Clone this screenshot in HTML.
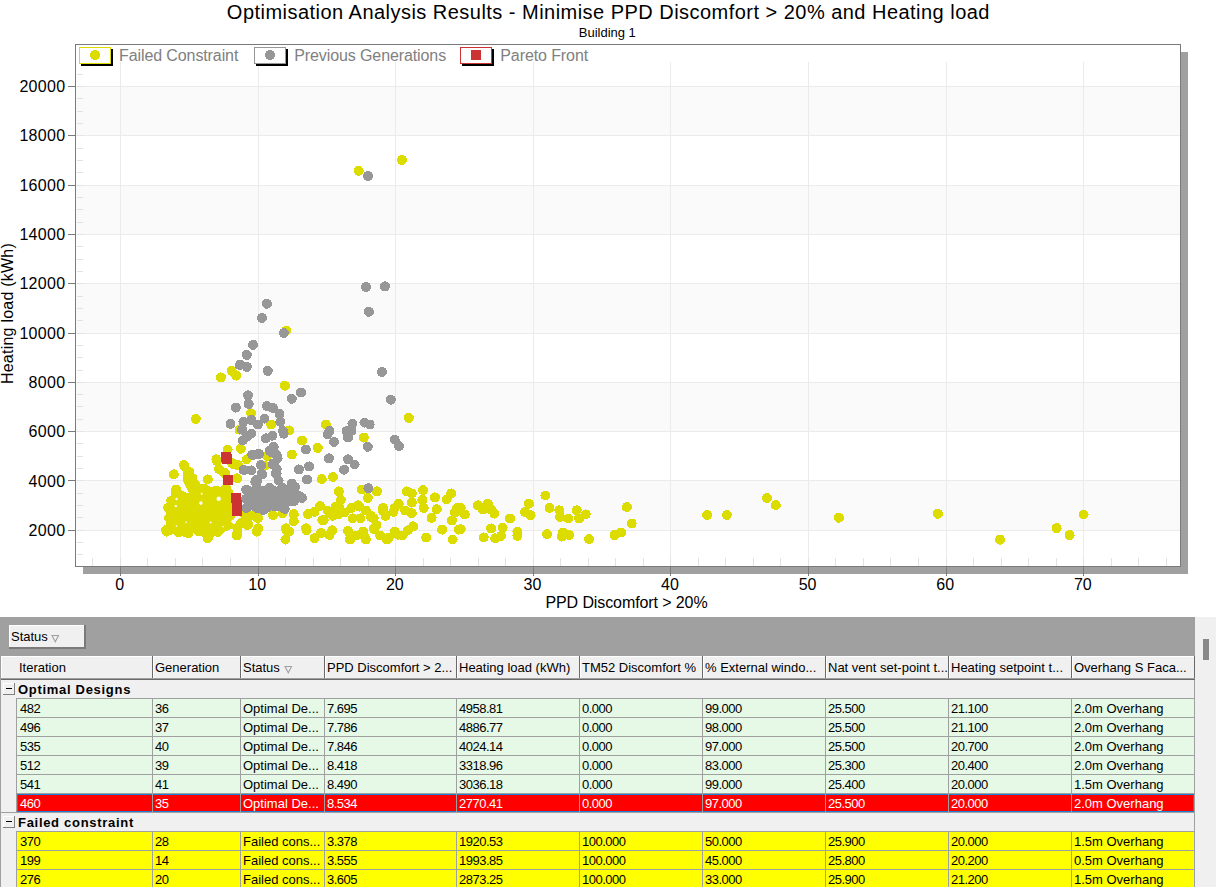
<!DOCTYPE html>
<html><head><meta charset="utf-8"><style>
html,body{margin:0;padding:0;background:#fff;width:1216px;height:887px;overflow:hidden;position:relative}
.tx{position:absolute;font-family:"Liberation Sans",sans-serif;font-size:13px;line-height:15px;white-space:nowrap;color:#000}
</style></head><body>
<svg width="1216" height="617" viewBox="0 0 1216 617" style="position:absolute;left:0;top:0">
<rect x="1181" y="52" width="7" height="522" fill="#a0a0a0"/>
<rect x="83" y="567" width="1105" height="7" fill="#a0a0a0"/>
<rect x="75.5" y="44.5" width="1105" height="522" fill="#fff" stroke="#7a7a7a" stroke-width="1"/>
<g shape-rendering="crispEdges">
<rect x="76" y="86" width="1104" height="49" fill="#fafafa"/>
<rect x="76" y="185" width="1104" height="49" fill="#fafafa"/>
<rect x="76" y="283" width="1104" height="50" fill="#fafafa"/>
<rect x="76" y="382" width="1104" height="49" fill="#fafafa"/>
<rect x="76" y="480" width="1104" height="50" fill="#fafafa"/>
<rect x="76" y="86" width="1104" height="1" fill="#ebebeb"/>
<rect x="76" y="135" width="1104" height="1" fill="#ebebeb"/>
<rect x="76" y="185" width="1104" height="1" fill="#ebebeb"/>
<rect x="76" y="234" width="1104" height="1" fill="#ebebeb"/>
<rect x="76" y="283" width="1104" height="1" fill="#ebebeb"/>
<rect x="76" y="333" width="1104" height="1" fill="#ebebeb"/>
<rect x="76" y="382" width="1104" height="1" fill="#ebebeb"/>
<rect x="76" y="431" width="1104" height="1" fill="#ebebeb"/>
<rect x="76" y="480" width="1104" height="1" fill="#ebebeb"/>
<rect x="76" y="530" width="1104" height="1" fill="#ebebeb"/>
<rect x="120" y="62" width="1" height="504" fill="#ebebeb"/>
<rect x="258" y="62" width="1" height="504" fill="#ebebeb"/>
<rect x="395" y="62" width="1" height="504" fill="#ebebeb"/>
<rect x="533" y="62" width="1" height="504" fill="#ebebeb"/>
<rect x="670" y="62" width="1" height="504" fill="#ebebeb"/>
<rect x="808" y="62" width="1" height="504" fill="#ebebeb"/>
<rect x="946" y="62" width="1" height="504" fill="#ebebeb"/>
<rect x="1083" y="62" width="1" height="504" fill="#ebebeb"/>
<rect x="77" y="554" width="6" height="1" fill="#e2e2e2"/>
<rect x="77" y="542" width="6" height="1" fill="#e2e2e2"/>
<rect x="77" y="530" width="6" height="1" fill="#e2e2e2"/>
<rect x="77" y="517" width="6" height="1" fill="#e2e2e2"/>
<rect x="77" y="505" width="6" height="1" fill="#e2e2e2"/>
<rect x="77" y="493" width="6" height="1" fill="#e2e2e2"/>
<rect x="77" y="480" width="6" height="1" fill="#e2e2e2"/>
<rect x="77" y="468" width="6" height="1" fill="#e2e2e2"/>
<rect x="77" y="456" width="6" height="1" fill="#e2e2e2"/>
<rect x="77" y="443" width="6" height="1" fill="#e2e2e2"/>
<rect x="77" y="431" width="6" height="1" fill="#e2e2e2"/>
<rect x="77" y="419" width="6" height="1" fill="#e2e2e2"/>
<rect x="77" y="406" width="6" height="1" fill="#e2e2e2"/>
<rect x="77" y="394" width="6" height="1" fill="#e2e2e2"/>
<rect x="77" y="382" width="6" height="1" fill="#e2e2e2"/>
<rect x="77" y="370" width="6" height="1" fill="#e2e2e2"/>
<rect x="77" y="357" width="6" height="1" fill="#e2e2e2"/>
<rect x="77" y="345" width="6" height="1" fill="#e2e2e2"/>
<rect x="77" y="333" width="6" height="1" fill="#e2e2e2"/>
<rect x="77" y="320" width="6" height="1" fill="#e2e2e2"/>
<rect x="77" y="308" width="6" height="1" fill="#e2e2e2"/>
<rect x="77" y="296" width="6" height="1" fill="#e2e2e2"/>
<rect x="77" y="283" width="6" height="1" fill="#e2e2e2"/>
<rect x="77" y="271" width="6" height="1" fill="#e2e2e2"/>
<rect x="77" y="259" width="6" height="1" fill="#e2e2e2"/>
<rect x="77" y="246" width="6" height="1" fill="#e2e2e2"/>
<rect x="77" y="234" width="6" height="1" fill="#e2e2e2"/>
<rect x="77" y="222" width="6" height="1" fill="#e2e2e2"/>
<rect x="77" y="209" width="6" height="1" fill="#e2e2e2"/>
<rect x="77" y="197" width="6" height="1" fill="#e2e2e2"/>
<rect x="77" y="185" width="6" height="1" fill="#e2e2e2"/>
<rect x="77" y="172" width="6" height="1" fill="#e2e2e2"/>
<rect x="77" y="160" width="6" height="1" fill="#e2e2e2"/>
<rect x="77" y="148" width="6" height="1" fill="#e2e2e2"/>
<rect x="77" y="135" width="6" height="1" fill="#e2e2e2"/>
<rect x="77" y="123" width="6" height="1" fill="#e2e2e2"/>
<rect x="77" y="111" width="6" height="1" fill="#e2e2e2"/>
<rect x="77" y="98" width="6" height="1" fill="#e2e2e2"/>
<rect x="77" y="86" width="6" height="1" fill="#e2e2e2"/>
<rect x="77" y="74" width="6" height="1" fill="#e2e2e2"/>
<rect x="92" y="558" width="1" height="8" fill="#e2e2e2"/>
<rect x="120" y="558" width="1" height="8" fill="#e2e2e2"/>
<rect x="147" y="558" width="1" height="8" fill="#e2e2e2"/>
<rect x="175" y="558" width="1" height="8" fill="#e2e2e2"/>
<rect x="202" y="558" width="1" height="8" fill="#e2e2e2"/>
<rect x="230" y="558" width="1" height="8" fill="#e2e2e2"/>
<rect x="258" y="558" width="1" height="8" fill="#e2e2e2"/>
<rect x="285" y="558" width="1" height="8" fill="#e2e2e2"/>
<rect x="313" y="558" width="1" height="8" fill="#e2e2e2"/>
<rect x="340" y="558" width="1" height="8" fill="#e2e2e2"/>
<rect x="368" y="558" width="1" height="8" fill="#e2e2e2"/>
<rect x="395" y="558" width="1" height="8" fill="#e2e2e2"/>
<rect x="423" y="558" width="1" height="8" fill="#e2e2e2"/>
<rect x="450" y="558" width="1" height="8" fill="#e2e2e2"/>
<rect x="478" y="558" width="1" height="8" fill="#e2e2e2"/>
<rect x="505" y="558" width="1" height="8" fill="#e2e2e2"/>
<rect x="533" y="558" width="1" height="8" fill="#e2e2e2"/>
<rect x="560" y="558" width="1" height="8" fill="#e2e2e2"/>
<rect x="588" y="558" width="1" height="8" fill="#e2e2e2"/>
<rect x="615" y="558" width="1" height="8" fill="#e2e2e2"/>
<rect x="643" y="558" width="1" height="8" fill="#e2e2e2"/>
<rect x="670" y="558" width="1" height="8" fill="#e2e2e2"/>
<rect x="698" y="558" width="1" height="8" fill="#e2e2e2"/>
<rect x="725" y="558" width="1" height="8" fill="#e2e2e2"/>
<rect x="753" y="558" width="1" height="8" fill="#e2e2e2"/>
<rect x="780" y="558" width="1" height="8" fill="#e2e2e2"/>
<rect x="808" y="558" width="1" height="8" fill="#e2e2e2"/>
<rect x="835" y="558" width="1" height="8" fill="#e2e2e2"/>
<rect x="863" y="558" width="1" height="8" fill="#e2e2e2"/>
<rect x="890" y="558" width="1" height="8" fill="#e2e2e2"/>
<rect x="918" y="558" width="1" height="8" fill="#e2e2e2"/>
<rect x="946" y="558" width="1" height="8" fill="#e2e2e2"/>
<rect x="973" y="558" width="1" height="8" fill="#e2e2e2"/>
<rect x="1001" y="558" width="1" height="8" fill="#e2e2e2"/>
<rect x="1028" y="558" width="1" height="8" fill="#e2e2e2"/>
<rect x="1056" y="558" width="1" height="8" fill="#e2e2e2"/>
<rect x="1083" y="558" width="1" height="8" fill="#e2e2e2"/>
<rect x="1111" y="558" width="1" height="8" fill="#e2e2e2"/>
<rect x="1138" y="558" width="1" height="8" fill="#e2e2e2"/>
<rect x="1166" y="558" width="1" height="8" fill="#e2e2e2"/>
<rect x="68" y="86" width="7" height="1" fill="#7a7a7a"/>
<rect x="68" y="135" width="7" height="1" fill="#7a7a7a"/>
<rect x="68" y="185" width="7" height="1" fill="#7a7a7a"/>
<rect x="68" y="234" width="7" height="1" fill="#7a7a7a"/>
<rect x="68" y="283" width="7" height="1" fill="#7a7a7a"/>
<rect x="68" y="333" width="7" height="1" fill="#7a7a7a"/>
<rect x="68" y="382" width="7" height="1" fill="#7a7a7a"/>
<rect x="68" y="431" width="7" height="1" fill="#7a7a7a"/>
<rect x="68" y="480" width="7" height="1" fill="#7a7a7a"/>
<rect x="68" y="530" width="7" height="1" fill="#7a7a7a"/>
<rect x="120" y="567" width="1" height="9" fill="#7a7a7a"/>
<rect x="258" y="567" width="1" height="9" fill="#7a7a7a"/>
<rect x="395" y="567" width="1" height="9" fill="#7a7a7a"/>
<rect x="533" y="567" width="1" height="9" fill="#7a7a7a"/>
<rect x="670" y="567" width="1" height="9" fill="#7a7a7a"/>
<rect x="808" y="567" width="1" height="9" fill="#7a7a7a"/>
<rect x="946" y="567" width="1" height="9" fill="#7a7a7a"/>
<rect x="1083" y="567" width="1" height="9" fill="#7a7a7a"/>
</g>
<g font-family="Liberation Sans" font-size="16" fill="#000">
<text x="65.4" y="92.1" text-anchor="end" letter-spacing="0.3">20000</text>
<text x="65.4" y="141.4" text-anchor="end" letter-spacing="0.3">18000</text>
<text x="65.4" y="190.7" text-anchor="end" letter-spacing="0.3">16000</text>
<text x="65.4" y="240.1" text-anchor="end" letter-spacing="0.3">14000</text>
<text x="65.4" y="289.4" text-anchor="end" letter-spacing="0.3">12000</text>
<text x="65.4" y="338.7" text-anchor="end" letter-spacing="0.3">10000</text>
<text x="65.4" y="388.0" text-anchor="end" letter-spacing="0.3">8000</text>
<text x="65.4" y="437.4" text-anchor="end" letter-spacing="0.3">6000</text>
<text x="65.4" y="486.7" text-anchor="end" letter-spacing="0.3">4000</text>
<text x="65.4" y="536.0" text-anchor="end" letter-spacing="0.3">2000</text>
<text x="119.6" y="589.6" text-anchor="middle">0</text>
<text x="257.2" y="589.6" text-anchor="middle">10</text>
<text x="394.8" y="589.6" text-anchor="middle">20</text>
<text x="532.4" y="589.6" text-anchor="middle">30</text>
<text x="670.0" y="589.6" text-anchor="middle">40</text>
<text x="807.6" y="589.6" text-anchor="middle">50</text>
<text x="945.2" y="589.6" text-anchor="middle">60</text>
<text x="1082.8" y="589.6" text-anchor="middle">70</text>
<text x="626.5" y="607.8" text-anchor="middle" letter-spacing="-0.1">PPD Discomfort &gt; 20%</text>
<text transform="translate(13,313.5) rotate(-90)" text-anchor="middle" letter-spacing="0.23">Heating load (kWh)</text>
</g>
<text x="608.4" y="18.9" text-anchor="middle" font-family="Liberation Sans" font-size="20" letter-spacing="0.47">Optimisation Analysis Results - Minimise PPD Discomfort &gt; 20% and Heating load</text>
<text x="607.3" y="37.2" text-anchor="middle" font-family="Liberation Sans" font-size="13">Building 1</text>
<g fill="#dcdc00" shape-rendering="crispEdges">
<circle cx="358.7" cy="170.8" r="5"/>
<circle cx="401.9" cy="159.9" r="5"/>
<circle cx="286.3" cy="330.6" r="5"/>
<circle cx="231.7" cy="370.9" r="5"/>
<circle cx="236.3" cy="375.6" r="5"/>
<circle cx="220.9" cy="377.4" r="5"/>
<circle cx="284.9" cy="385.7" r="5"/>
<circle cx="195.8" cy="419.0" r="5"/>
<circle cx="251.0" cy="413.3" r="5"/>
<circle cx="239.5" cy="429.7" r="5"/>
<circle cx="271.3" cy="424.5" r="5"/>
<circle cx="289.2" cy="430.4" r="5"/>
<circle cx="302.0" cy="440.5" r="5"/>
<circle cx="227.6" cy="449.5" r="5"/>
<circle cx="240.8" cy="448.8" r="5"/>
<circle cx="291.8" cy="454.5" r="5"/>
<circle cx="267.1" cy="456.0" r="5"/>
<circle cx="216.4" cy="459.3" r="5"/>
<circle cx="246.7" cy="459.3" r="5"/>
<circle cx="408.8" cy="417.9" r="5"/>
<circle cx="325.9" cy="424.5" r="5"/>
<circle cx="363.8" cy="437.6" r="5"/>
<circle cx="317.8" cy="447.9" r="5"/>
<circle cx="183.9" cy="465.1" r="5"/>
<circle cx="173.8" cy="474.3" r="5"/>
<circle cx="207.8" cy="479.4" r="5"/>
<circle cx="216.9" cy="461.1" r="5"/>
<circle cx="218.9" cy="469.2" r="5"/>
<circle cx="225.0" cy="473.3" r="5"/>
<circle cx="238.2" cy="465.1" r="5"/>
<circle cx="232.1" cy="463.1" r="5"/>
<circle cx="237.2" cy="478.3" r="5"/>
<circle cx="189.5" cy="472.2" r="5"/>
<circle cx="192.5" cy="478.3" r="5"/>
<circle cx="176.3" cy="489.5" r="5"/>
<circle cx="195.6" cy="485.4" r="5"/>
<circle cx="203.7" cy="488.5" r="5"/>
<circle cx="215.9" cy="490.5" r="5"/>
<circle cx="226.0" cy="488.5" r="5"/>
<circle cx="171.2" cy="500.7" r="5"/>
<circle cx="168.2" cy="507.8" r="5"/>
<circle cx="169.2" cy="517.9" r="5"/>
<circle cx="166.2" cy="530.1" r="5"/>
<circle cx="178.3" cy="532.1" r="5"/>
<circle cx="188.5" cy="533.1" r="5"/>
<circle cx="198.6" cy="531.1" r="5"/>
<circle cx="207.8" cy="538.2" r="5"/>
<circle cx="218.9" cy="530.1" r="5"/>
<circle cx="226.0" cy="526.0" r="5"/>
<circle cx="237.2" cy="534.1" r="5"/>
<circle cx="230.1" cy="515.9" r="5"/>
<circle cx="228.0" cy="500.7" r="5"/>
<circle cx="234.2" cy="464.5" r="5"/>
<circle cx="264.5" cy="465.8" r="5"/>
<circle cx="223.7" cy="472.4" r="5"/>
<circle cx="238.0" cy="465.4" r="5"/>
<circle cx="321.8" cy="479.1" r="5"/>
<circle cx="273.0" cy="515.1" r="5"/>
<circle cx="282.7" cy="513.1" r="5"/>
<circle cx="293.8" cy="514.1" r="5"/>
<circle cx="293.8" cy="521.2" r="5"/>
<circle cx="308.0" cy="514.1" r="5"/>
<circle cx="320.2" cy="506.0" r="5"/>
<circle cx="322.3" cy="520.2" r="5"/>
<circle cx="255.3" cy="516.1" r="5"/>
<circle cx="245.1" cy="515.1" r="5"/>
<circle cx="241.1" cy="523.2" r="5"/>
<circle cx="248.2" cy="524.2" r="5"/>
<circle cx="258.3" cy="528.3" r="5"/>
<circle cx="285.7" cy="528.3" r="5"/>
<circle cx="306.0" cy="528.3" r="5"/>
<circle cx="256.6" cy="531.6" r="5"/>
<circle cx="306.6" cy="530.3" r="5"/>
<circle cx="286.8" cy="530.3" r="5"/>
<circle cx="285.5" cy="539.5" r="5"/>
<circle cx="289.5" cy="531.6" r="5"/>
<circle cx="236.8" cy="535.5" r="5"/>
<circle cx="247.4" cy="525.0" r="5"/>
<circle cx="332.9" cy="477.0" r="5"/>
<circle cx="338.8" cy="491.4" r="5"/>
<circle cx="340.8" cy="500.0" r="5"/>
<circle cx="361.8" cy="489.5" r="5"/>
<circle cx="377.0" cy="491.4" r="5"/>
<circle cx="367.8" cy="498.0" r="5"/>
<circle cx="406.6" cy="491.4" r="5"/>
<circle cx="411.8" cy="493.4" r="5"/>
<circle cx="423.0" cy="490.1" r="5"/>
<circle cx="422.4" cy="500.0" r="5"/>
<circle cx="423.7" cy="507.9" r="5"/>
<circle cx="434.9" cy="497.4" r="5"/>
<circle cx="451.3" cy="493.4" r="5"/>
<circle cx="446.7" cy="499.3" r="5"/>
<circle cx="436.8" cy="509.2" r="5"/>
<circle cx="431.6" cy="517.8" r="5"/>
<circle cx="457.2" cy="507.9" r="5"/>
<circle cx="452.0" cy="520.4" r="5"/>
<circle cx="314.5" cy="511.8" r="5"/>
<circle cx="327.6" cy="510.5" r="5"/>
<circle cx="335.5" cy="506.6" r="5"/>
<circle cx="332.9" cy="515.8" r="5"/>
<circle cx="351.3" cy="507.9" r="5"/>
<circle cx="357.9" cy="505.3" r="5"/>
<circle cx="352.6" cy="518.4" r="5"/>
<circle cx="365.8" cy="510.5" r="5"/>
<circle cx="373.7" cy="518.4" r="5"/>
<circle cx="382.9" cy="507.9" r="5"/>
<circle cx="385.5" cy="515.8" r="5"/>
<circle cx="393.4" cy="511.8" r="5"/>
<circle cx="398.7" cy="503.9" r="5"/>
<circle cx="405.3" cy="510.5" r="5"/>
<circle cx="411.8" cy="513.2" r="5"/>
<circle cx="411.8" cy="502.6" r="5"/>
<circle cx="314.5" cy="538.2" r="5"/>
<circle cx="321.1" cy="532.9" r="5"/>
<circle cx="332.2" cy="530.3" r="5"/>
<circle cx="329.6" cy="534.9" r="5"/>
<circle cx="348.0" cy="530.9" r="5"/>
<circle cx="350.0" cy="539.5" r="5"/>
<circle cx="363.2" cy="531.6" r="5"/>
<circle cx="365.8" cy="539.5" r="5"/>
<circle cx="373.7" cy="528.9" r="5"/>
<circle cx="376.3" cy="525.0" r="5"/>
<circle cx="380.3" cy="535.5" r="5"/>
<circle cx="386.8" cy="539.5" r="5"/>
<circle cx="394.7" cy="531.6" r="5"/>
<circle cx="402.6" cy="535.5" r="5"/>
<circle cx="413.2" cy="526.3" r="5"/>
<circle cx="407.9" cy="530.3" r="5"/>
<circle cx="426.3" cy="537.5" r="5"/>
<circle cx="442.1" cy="529.6" r="5"/>
<circle cx="452.6" cy="539.5" r="5"/>
<circle cx="458.6" cy="529.6" r="5"/>
<circle cx="371.0" cy="515.8" r="5"/>
<circle cx="360.5" cy="518.4" r="5"/>
<circle cx="356.6" cy="535.5" r="5"/>
<circle cx="339.5" cy="507.9" r="5"/>
<circle cx="460.7" cy="507.8" r="5"/>
<circle cx="454.9" cy="512.8" r="5"/>
<circle cx="464.8" cy="514.4" r="5"/>
<circle cx="460.7" cy="529.2" r="5"/>
<circle cx="478.0" cy="505.4" r="5"/>
<circle cx="487.8" cy="503.7" r="5"/>
<circle cx="482.9" cy="509.5" r="5"/>
<circle cx="491.1" cy="509.5" r="5"/>
<circle cx="494.4" cy="513.6" r="5"/>
<circle cx="510.0" cy="518.5" r="5"/>
<circle cx="528.9" cy="503.7" r="5"/>
<circle cx="524.8" cy="512.0" r="5"/>
<circle cx="530.6" cy="515.2" r="5"/>
<circle cx="491.1" cy="528.4" r="5"/>
<circle cx="502.6" cy="527.6" r="5"/>
<circle cx="501.0" cy="535.8" r="5"/>
<circle cx="495.2" cy="538.3" r="5"/>
<circle cx="483.7" cy="537.4" r="5"/>
<circle cx="517.4" cy="531.7" r="5"/>
<circle cx="517.4" cy="535.8" r="5"/>
<circle cx="545.4" cy="495.5" r="5"/>
<circle cx="549.5" cy="507.8" r="5"/>
<circle cx="559.4" cy="510.3" r="5"/>
<circle cx="560.2" cy="516.9" r="5"/>
<circle cx="568.4" cy="518.5" r="5"/>
<circle cx="576.6" cy="510.3" r="5"/>
<circle cx="579.1" cy="518.5" r="5"/>
<circle cx="585.7" cy="514.4" r="5"/>
<circle cx="547.0" cy="534.1" r="5"/>
<circle cx="562.7" cy="532.5" r="5"/>
<circle cx="561.8" cy="536.6" r="5"/>
<circle cx="569.2" cy="535.0" r="5"/>
<circle cx="589.0" cy="539.1" r="5"/>
<circle cx="626.8" cy="507.0" r="5"/>
<circle cx="631.7" cy="523.5" r="5"/>
<circle cx="621.1" cy="532.5" r="5"/>
<circle cx="614.5" cy="535.0" r="5"/>
<circle cx="707.1" cy="515.0" r="5"/>
<circle cx="726.8" cy="515.0" r="5"/>
<circle cx="766.9" cy="498.0" r="5"/>
<circle cx="775.8" cy="505.1" r="5"/>
<circle cx="838.9" cy="517.8" r="5"/>
<circle cx="937.9" cy="513.8" r="5"/>
<circle cx="1000.0" cy="539.7" r="5"/>
<circle cx="1056.6" cy="528.1" r="5"/>
<circle cx="1069.6" cy="535.1" r="5"/>
<circle cx="1083.6" cy="514.5" r="5"/>
<circle cx="344.4" cy="512.5" r="5"/>
<circle cx="371.0" cy="517.0" r="5"/>
<circle cx="382.9" cy="511.0" r="5"/>
<circle cx="394.7" cy="508.0" r="5"/>
<circle cx="363.6" cy="534.7" r="5"/>
<circle cx="374.0" cy="528.8" r="5"/>
<circle cx="388.8" cy="537.7" r="5"/>
<circle cx="397.7" cy="534.7" r="5"/>
<circle cx="350.3" cy="534.7" r="5"/>
<circle cx="338.5" cy="514.0" r="5"/>
<circle cx="359.2" cy="506.6" r="5"/>
<circle cx="329.6" cy="512.5" r="5"/>
<circle cx="323.7" cy="520.0" r="5"/>
<circle cx="252.0" cy="515.5" r="5"/>
<circle cx="258.0" cy="518.0" r="5"/>
<path d="M179.2,465.6 L181.4,461.7 186.5,461.7 188.7,465.6 191.6,470.1 196.6,476.9 198.9,483.7 205.1,485.9 210,486.5 215.9,488 224,486.5 230,488 233,491 236,500 236,516 231,516 229,519.4 234.2,524.6 238,520.2 242,516 242,529 242.4,535 238,539.4 233.5,535.7 232.8,529 229,529 224.6,532 219.4,536.8 214.3,536.4 208.3,542.7 203.9,538.7 199.5,534.2 194.3,532.8 188.3,537.9 180.2,535.7 175.8,532.8 166.1,536.8 161.7,533.5 161.7,529.8 165.4,526.1 166.9,519.4 166.1,514.2 165.4,507.6 167.3,500.6 171.3,497.2 171.3,491.6 171.8,488.2 175.2,486.2 178.6,487.6 181.4,490.4 189.3,493.8 185.4,485.9 182.5,480.3 183.1,471.8 179.7,468.5 Z"/>
</g>
<g fill="#fafafa">
<circle cx="218.7" cy="498.7" r="2.2"/>
<circle cx="200.9" cy="503.1" r="1.8"/>
<circle cx="175.8" cy="506.1" r="1.2"/>
<circle cx="176.6" cy="499" r="1.2"/>
<circle cx="201.7" cy="493.8" r="1"/>
<circle cx="186.1" cy="522.4" r="0.8"/>
<circle cx="176.5" cy="526.1" r="0.8"/>
<circle cx="210.6" cy="522.4" r="1"/>
<circle cx="223.1" cy="526.8" r="0.8"/>
<circle cx="233.5" cy="521.5" r="2"/>
</g>
<g fill="#979797" shape-rendering="crispEdges">
<circle cx="368.0" cy="176.0" r="5"/>
<circle cx="366.0" cy="287.0" r="5"/>
<circle cx="385.0" cy="286.4" r="5"/>
<circle cx="266.9" cy="303.8" r="5"/>
<circle cx="261.9" cy="317.9" r="5"/>
<circle cx="283.8" cy="333.0" r="5"/>
<circle cx="253.0" cy="344.8" r="5"/>
<circle cx="246.8" cy="354.9" r="5"/>
<circle cx="239.8" cy="365.1" r="5"/>
<circle cx="246.8" cy="367.0" r="5"/>
<circle cx="267.8" cy="370.9" r="5"/>
<circle cx="368.9" cy="311.8" r="5"/>
<circle cx="381.9" cy="371.9" r="5"/>
<circle cx="240.1" cy="364.6" r="5"/>
<circle cx="246.7" cy="366.6" r="5"/>
<circle cx="301.0" cy="392.6" r="5"/>
<circle cx="291.8" cy="398.8" r="5"/>
<circle cx="248.0" cy="395.3" r="5"/>
<circle cx="248.7" cy="404.0" r="5"/>
<circle cx="235.8" cy="407.6" r="5"/>
<circle cx="266.8" cy="406.0" r="5"/>
<circle cx="273.0" cy="408.0" r="5"/>
<circle cx="279.6" cy="414.0" r="5"/>
<circle cx="280.3" cy="421.8" r="5"/>
<circle cx="282.9" cy="431.0" r="5"/>
<circle cx="283.6" cy="433.7" r="5"/>
<circle cx="230.5" cy="423.8" r="5"/>
<circle cx="243.4" cy="421.8" r="5"/>
<circle cx="251.3" cy="419.9" r="5"/>
<circle cx="257.9" cy="424.5" r="5"/>
<circle cx="264.5" cy="418.6" r="5"/>
<circle cx="242.1" cy="429.7" r="5"/>
<circle cx="251.3" cy="433.7" r="5"/>
<circle cx="247.4" cy="436.3" r="5"/>
<circle cx="242.8" cy="440.3" r="5"/>
<circle cx="265.8" cy="438.3" r="5"/>
<circle cx="272.4" cy="435.7" r="5"/>
<circle cx="273.7" cy="446.8" r="5"/>
<circle cx="269.7" cy="450.8" r="5"/>
<circle cx="276.3" cy="454.7" r="5"/>
<circle cx="254.0" cy="454.7" r="5"/>
<circle cx="259.2" cy="454.1" r="5"/>
<circle cx="305.9" cy="449.5" r="5"/>
<circle cx="390.8" cy="399.7" r="5"/>
<circle cx="352.4" cy="423.8" r="5"/>
<circle cx="364.5" cy="422.5" r="5"/>
<circle cx="369.7" cy="424.5" r="5"/>
<circle cx="346.7" cy="431.0" r="5"/>
<circle cx="351.3" cy="431.0" r="5"/>
<circle cx="348.0" cy="437.6" r="5"/>
<circle cx="329.6" cy="431.0" r="5"/>
<circle cx="327.6" cy="434.3" r="5"/>
<circle cx="334.0" cy="441.8" r="5"/>
<circle cx="367.8" cy="446.8" r="5"/>
<circle cx="394.7" cy="439.6" r="5"/>
<circle cx="398.9" cy="446.2" r="5"/>
<circle cx="329.0" cy="458.4" r="5"/>
<circle cx="348.0" cy="459.3" r="5"/>
<circle cx="277.6" cy="458.3" r="5"/>
<circle cx="273.6" cy="463.3" r="5"/>
<circle cx="261.4" cy="465.4" r="5"/>
<circle cx="244.1" cy="469.9" r="5"/>
<circle cx="251.2" cy="470.4" r="5"/>
<circle cx="298.9" cy="469.4" r="5"/>
<circle cx="309.1" cy="466.4" r="5"/>
<circle cx="307.0" cy="479.6" r="5"/>
<circle cx="262.4" cy="474.5" r="5"/>
<circle cx="276.6" cy="473.5" r="5"/>
<circle cx="255.3" cy="481.6" r="5"/>
<circle cx="257.0" cy="481.0" r="5"/>
<circle cx="278.6" cy="480.6" r="5"/>
<circle cx="291.8" cy="483.6" r="5"/>
<circle cx="294.9" cy="486.7" r="5"/>
<circle cx="246.2" cy="489.7" r="5"/>
<circle cx="257.3" cy="488.7" r="5"/>
<circle cx="269.5" cy="487.7" r="5"/>
<circle cx="282.7" cy="487.7" r="5"/>
<circle cx="287.8" cy="491.7" r="5"/>
<circle cx="302.0" cy="497.8" r="5"/>
<circle cx="295.9" cy="495.8" r="5"/>
<circle cx="246.2" cy="498.8" r="5"/>
<circle cx="257.3" cy="498.8" r="5"/>
<circle cx="268.5" cy="496.8" r="5"/>
<circle cx="279.6" cy="496.8" r="5"/>
<circle cx="289.8" cy="500.9" r="5"/>
<circle cx="246.2" cy="508.0" r="5"/>
<circle cx="257.3" cy="508.0" r="5"/>
<circle cx="267.5" cy="507.0" r="5"/>
<circle cx="278.6" cy="506.0" r="5"/>
<circle cx="284.7" cy="509.0" r="5"/>
<circle cx="263.4" cy="510.0" r="5"/>
<circle cx="354.6" cy="464.5" r="5"/>
<circle cx="344.1" cy="469.7" r="5"/>
<circle cx="368.4" cy="488.2" r="5"/>
<circle cx="252.2" cy="454.7" r="5"/>
<circle cx="258.5" cy="453.9" r="5"/>
<circle cx="243.5" cy="469.7" r="5"/>
<circle cx="251.4" cy="470.5" r="5"/>
<circle cx="260.9" cy="465.0" r="5"/>
<circle cx="261.7" cy="473.7" r="5"/>
<circle cx="256.2" cy="480.0" r="5"/>
<circle cx="271.9" cy="452.4" r="5"/>
<circle cx="277.5" cy="457.1" r="5"/>
<circle cx="272.7" cy="464.2" r="5"/>
<circle cx="276.7" cy="468.9" r="5"/>
<circle cx="275.9" cy="473.7" r="5"/>
<circle cx="249.0" cy="491.0" r="5"/>
<circle cx="254.0" cy="491.0" r="5"/>
<circle cx="259.0" cy="491.0" r="5"/>
<circle cx="264.0" cy="491.0" r="5"/>
<circle cx="269.0" cy="491.0" r="5"/>
<circle cx="274.0" cy="491.0" r="5"/>
<circle cx="279.0" cy="491.0" r="5"/>
<circle cx="284.0" cy="491.0" r="5"/>
<circle cx="289.0" cy="491.0" r="5"/>
<circle cx="294.0" cy="491.0" r="5"/>
<circle cx="249.0" cy="496.0" r="5"/>
<circle cx="254.0" cy="496.0" r="5"/>
<circle cx="259.0" cy="496.0" r="5"/>
<circle cx="264.0" cy="496.0" r="5"/>
<circle cx="269.0" cy="496.0" r="5"/>
<circle cx="274.0" cy="496.0" r="5"/>
<circle cx="279.0" cy="496.0" r="5"/>
<circle cx="284.0" cy="496.0" r="5"/>
<circle cx="289.0" cy="496.0" r="5"/>
<circle cx="294.0" cy="496.0" r="5"/>
<circle cx="299.0" cy="496.0" r="5"/>
<circle cx="249.0" cy="501.0" r="5"/>
<circle cx="254.0" cy="501.0" r="5"/>
<circle cx="259.0" cy="501.0" r="5"/>
<circle cx="264.0" cy="501.0" r="5"/>
<circle cx="269.0" cy="501.0" r="5"/>
<circle cx="274.0" cy="501.0" r="5"/>
<circle cx="279.0" cy="501.0" r="5"/>
<circle cx="284.0" cy="501.0" r="5"/>
<circle cx="289.0" cy="501.0" r="5"/>
<circle cx="294.0" cy="501.0" r="5"/>
<circle cx="249.0" cy="506.0" r="5"/>
<circle cx="254.0" cy="506.0" r="5"/>
<circle cx="259.0" cy="506.0" r="5"/>
<circle cx="264.0" cy="506.0" r="5"/>
<circle cx="269.0" cy="506.0" r="5"/>
<circle cx="274.0" cy="506.0" r="5"/>
<circle cx="279.0" cy="506.0" r="5"/>
<circle cx="284.0" cy="506.0" r="5"/>
</g>
<g fill="#cc3333" shape-rendering="crispEdges">
<rect x="221" y="452" width="10" height="10"/>
<rect x="222" y="454" width="10" height="10"/>
<rect x="223" y="475" width="10" height="10"/>
<rect x="231" y="493" width="10" height="10"/>
<rect x="232" y="500" width="10" height="10"/>
<rect x="232" y="506" width="10" height="10"/>
</g>
<rect x="81" y="49" width="32" height="17" fill="#000" shape-rendering="crispEdges"/><rect x="79.5" y="47.5" width="31" height="16" fill="#fff" stroke="#dcdc00" stroke-width="1" shape-rendering="crispEdges"/><circle cx="95" cy="55" r="5" fill="#dcdc00" shape-rendering="crispEdges"/>
<rect x="256" y="49" width="32" height="17" fill="#000" shape-rendering="crispEdges"/><rect x="254.5" y="47.5" width="31" height="16" fill="#fff" stroke="#979797" stroke-width="1" shape-rendering="crispEdges"/><circle cx="270" cy="55" r="5" fill="#979797" shape-rendering="crispEdges"/>
<rect x="462" y="49" width="32" height="17" fill="#000" shape-rendering="crispEdges"/><rect x="460.5" y="47.5" width="31" height="16" fill="#fff" stroke="#cc3333" stroke-width="1" shape-rendering="crispEdges"/><rect x="471" y="50" width="10" height="10" fill="#cc3333"/>
<g font-family="Liberation Sans" font-size="16" fill="#808080" letter-spacing="-0.1">
<text x="119" y="60.7">Failed Constraint</text>
<text x="294.2" y="60.7">Previous Generations</text>
<text x="500.3" y="60.7">Pareto Front</text>
</g>
</svg>
<div style="position:absolute;left:0px;top:617px;width:1195px;height:270px;background:#f0f0f0;"></div>
<div style="position:absolute;left:0px;top:617px;width:1195px;height:39px;background:#a0a0a0;"></div>
<div style="position:absolute;left:9px;top:625px;width:77px;height:24px;background:#7a7a7a;"></div>
<div style="position:absolute;left:9px;top:625px;width:75px;height:22px;background:#fff;"></div>
<div style="position:absolute;left:10px;top:626px;width:74px;height:21px;background:#f0f0f0;"></div>
<div class="tx" style="left:11px;top:629px;">Status</div>
<svg style="position:absolute;left:51px;top:635px" width="9" height="8"><polygon points="1,0.5 7.5,0.5 4.3,6.8" fill="none" stroke="#a0a0a0" stroke-width="1.1"/></svg>
<div style="position:absolute;left:0px;top:656px;width:1195px;height:24px;background:#f0f0f0;"></div>
<div style="position:absolute;left:1px;top:656px;width:1193px;height:1px;background:#fff;"></div>
<div style="position:absolute;left:152px;top:656px;width:1px;height:24px;background:#696969;"></div>
<div style="position:absolute;left:1px;top:657px;width:1px;height:21px;background:#fff;"></div>
<div class="tx" style="left:19px;top:660px;">Iteration</div>
<div style="position:absolute;left:240px;top:656px;width:1px;height:24px;background:#696969;"></div>
<div style="position:absolute;left:153px;top:657px;width:1px;height:21px;background:#fff;"></div>
<div class="tx" style="left:155px;top:660px;">Generation</div>
<div style="position:absolute;left:324px;top:656px;width:1px;height:24px;background:#696969;"></div>
<div style="position:absolute;left:241px;top:657px;width:1px;height:21px;background:#fff;"></div>
<svg style="position:absolute;left:284px;top:666px" width="9" height="8"><polygon points="1,0.5 7.5,0.5 4.3,6.8" fill="none" stroke="#a0a0a0" stroke-width="1.1"/></svg>
<div class="tx" style="left:243px;top:660px;">Status</div>
<div style="position:absolute;left:456px;top:656px;width:1px;height:24px;background:#696969;"></div>
<div style="position:absolute;left:325px;top:657px;width:1px;height:21px;background:#fff;"></div>
<div class="tx" style="left:327px;top:660px;">PPD Discomfort &gt; 2...</div>
<div style="position:absolute;left:579px;top:656px;width:1px;height:24px;background:#696969;"></div>
<div style="position:absolute;left:457px;top:657px;width:1px;height:21px;background:#fff;"></div>
<div class="tx" style="left:459px;top:660px;">Heating load (kWh)</div>
<div style="position:absolute;left:702px;top:656px;width:1px;height:24px;background:#696969;"></div>
<div style="position:absolute;left:580px;top:657px;width:1px;height:21px;background:#fff;"></div>
<div class="tx" style="left:582px;top:660px;">TM52 Discomfort %</div>
<div style="position:absolute;left:825px;top:656px;width:1px;height:24px;background:#696969;"></div>
<div style="position:absolute;left:703px;top:657px;width:1px;height:21px;background:#fff;"></div>
<div class="tx" style="left:705px;top:660px;">% External windo...</div>
<div style="position:absolute;left:948px;top:656px;width:1px;height:24px;background:#696969;"></div>
<div style="position:absolute;left:826px;top:657px;width:1px;height:21px;background:#fff;"></div>
<div class="tx" style="left:828px;top:660px;">Nat vent set-point t...</div>
<div style="position:absolute;left:1071px;top:656px;width:1px;height:24px;background:#696969;"></div>
<div style="position:absolute;left:949px;top:657px;width:1px;height:21px;background:#fff;"></div>
<div class="tx" style="left:951px;top:660px;">Heating setpoint t...</div>
<div style="position:absolute;left:1194px;top:656px;width:1px;height:24px;background:#696969;"></div>
<div style="position:absolute;left:1072px;top:657px;width:1px;height:21px;background:#fff;"></div>
<div class="tx" style="left:1074px;top:660px;">Overhang S Faca...</div>
<div style="position:absolute;left:1px;top:678px;width:1194px;height:1px;background:#a0a0a0;"></div>
<div style="position:absolute;left:1px;top:679px;width:1194px;height:1px;background:#696969;"></div>
<div style="position:absolute;left:0px;top:617px;width:1px;height:270px;background:#a0a0a0;"></div>
<div style="position:absolute;left:3px;top:683px;width:12px;height:12px;background:#808080;"></div>
<div style="position:absolute;left:3px;top:683px;width:11px;height:11px;background:#fff;"></div>
<div style="position:absolute;left:4px;top:684px;width:10px;height:10px;background:#f0f0f0;"></div>
<div style="position:absolute;left:6px;top:688px;width:6px;height:1px;background:#000;"></div>
<div class="tx" style="left:18px;top:682px;font-weight:bold;letter-spacing:0.7px">Optimal Designs</div>
<div style="position:absolute;left:16px;top:698px;width:1179px;height:20px;background:#a0a0a0;"></div>
<div style="position:absolute;left:17px;top:699px;width:1177px;height:18px;background:#e6f9e6;"></div>
<div class="tx" style="left:20px;top:701px;color:#000;letter-spacing:-0.5px;">482</div>
<div style="position:absolute;left:152px;top:698px;width:1px;height:20px;background:#a0a0a0;"></div>
<div class="tx" style="left:155px;top:701px;color:#000;letter-spacing:-0.5px;">36</div>
<div style="position:absolute;left:240px;top:698px;width:1px;height:20px;background:#a0a0a0;"></div>
<div class="tx" style="left:243px;top:701px;color:#000;">Optimal De...</div>
<div style="position:absolute;left:324px;top:698px;width:1px;height:20px;background:#a0a0a0;"></div>
<div class="tx" style="left:327px;top:701px;color:#000;letter-spacing:-0.5px;">7.695</div>
<div style="position:absolute;left:456px;top:698px;width:1px;height:20px;background:#a0a0a0;"></div>
<div class="tx" style="left:459px;top:701px;color:#000;letter-spacing:-0.5px;">4958.81</div>
<div style="position:absolute;left:579px;top:698px;width:1px;height:20px;background:#a0a0a0;"></div>
<div class="tx" style="left:582px;top:701px;color:#000;letter-spacing:-0.5px;">0.000</div>
<div style="position:absolute;left:702px;top:698px;width:1px;height:20px;background:#a0a0a0;"></div>
<div class="tx" style="left:705px;top:701px;color:#000;letter-spacing:-0.5px;">99.000</div>
<div style="position:absolute;left:825px;top:698px;width:1px;height:20px;background:#a0a0a0;"></div>
<div class="tx" style="left:828px;top:701px;color:#000;letter-spacing:-0.5px;">25.500</div>
<div style="position:absolute;left:948px;top:698px;width:1px;height:20px;background:#a0a0a0;"></div>
<div class="tx" style="left:951px;top:701px;color:#000;letter-spacing:-0.5px;">21.100</div>
<div style="position:absolute;left:1071px;top:698px;width:1px;height:20px;background:#a0a0a0;"></div>
<div class="tx" style="left:1074px;top:701px;color:#000;">2.0m Overhang</div>
<div style="position:absolute;left:16px;top:717px;width:1179px;height:20px;background:#a0a0a0;"></div>
<div style="position:absolute;left:17px;top:718px;width:1177px;height:18px;background:#e6f9e6;"></div>
<div class="tx" style="left:20px;top:720px;color:#000;letter-spacing:-0.5px;">496</div>
<div style="position:absolute;left:152px;top:717px;width:1px;height:20px;background:#a0a0a0;"></div>
<div class="tx" style="left:155px;top:720px;color:#000;letter-spacing:-0.5px;">37</div>
<div style="position:absolute;left:240px;top:717px;width:1px;height:20px;background:#a0a0a0;"></div>
<div class="tx" style="left:243px;top:720px;color:#000;">Optimal De...</div>
<div style="position:absolute;left:324px;top:717px;width:1px;height:20px;background:#a0a0a0;"></div>
<div class="tx" style="left:327px;top:720px;color:#000;letter-spacing:-0.5px;">7.786</div>
<div style="position:absolute;left:456px;top:717px;width:1px;height:20px;background:#a0a0a0;"></div>
<div class="tx" style="left:459px;top:720px;color:#000;letter-spacing:-0.5px;">4886.77</div>
<div style="position:absolute;left:579px;top:717px;width:1px;height:20px;background:#a0a0a0;"></div>
<div class="tx" style="left:582px;top:720px;color:#000;letter-spacing:-0.5px;">0.000</div>
<div style="position:absolute;left:702px;top:717px;width:1px;height:20px;background:#a0a0a0;"></div>
<div class="tx" style="left:705px;top:720px;color:#000;letter-spacing:-0.5px;">98.000</div>
<div style="position:absolute;left:825px;top:717px;width:1px;height:20px;background:#a0a0a0;"></div>
<div class="tx" style="left:828px;top:720px;color:#000;letter-spacing:-0.5px;">25.500</div>
<div style="position:absolute;left:948px;top:717px;width:1px;height:20px;background:#a0a0a0;"></div>
<div class="tx" style="left:951px;top:720px;color:#000;letter-spacing:-0.5px;">21.100</div>
<div style="position:absolute;left:1071px;top:717px;width:1px;height:20px;background:#a0a0a0;"></div>
<div class="tx" style="left:1074px;top:720px;color:#000;">2.0m Overhang</div>
<div style="position:absolute;left:16px;top:736px;width:1179px;height:20px;background:#a0a0a0;"></div>
<div style="position:absolute;left:17px;top:737px;width:1177px;height:18px;background:#e6f9e6;"></div>
<div class="tx" style="left:20px;top:739px;color:#000;letter-spacing:-0.5px;">535</div>
<div style="position:absolute;left:152px;top:736px;width:1px;height:20px;background:#a0a0a0;"></div>
<div class="tx" style="left:155px;top:739px;color:#000;letter-spacing:-0.5px;">40</div>
<div style="position:absolute;left:240px;top:736px;width:1px;height:20px;background:#a0a0a0;"></div>
<div class="tx" style="left:243px;top:739px;color:#000;">Optimal De...</div>
<div style="position:absolute;left:324px;top:736px;width:1px;height:20px;background:#a0a0a0;"></div>
<div class="tx" style="left:327px;top:739px;color:#000;letter-spacing:-0.5px;">7.846</div>
<div style="position:absolute;left:456px;top:736px;width:1px;height:20px;background:#a0a0a0;"></div>
<div class="tx" style="left:459px;top:739px;color:#000;letter-spacing:-0.5px;">4024.14</div>
<div style="position:absolute;left:579px;top:736px;width:1px;height:20px;background:#a0a0a0;"></div>
<div class="tx" style="left:582px;top:739px;color:#000;letter-spacing:-0.5px;">0.000</div>
<div style="position:absolute;left:702px;top:736px;width:1px;height:20px;background:#a0a0a0;"></div>
<div class="tx" style="left:705px;top:739px;color:#000;letter-spacing:-0.5px;">97.000</div>
<div style="position:absolute;left:825px;top:736px;width:1px;height:20px;background:#a0a0a0;"></div>
<div class="tx" style="left:828px;top:739px;color:#000;letter-spacing:-0.5px;">25.500</div>
<div style="position:absolute;left:948px;top:736px;width:1px;height:20px;background:#a0a0a0;"></div>
<div class="tx" style="left:951px;top:739px;color:#000;letter-spacing:-0.5px;">20.700</div>
<div style="position:absolute;left:1071px;top:736px;width:1px;height:20px;background:#a0a0a0;"></div>
<div class="tx" style="left:1074px;top:739px;color:#000;">2.0m Overhang</div>
<div style="position:absolute;left:16px;top:755px;width:1179px;height:20px;background:#a0a0a0;"></div>
<div style="position:absolute;left:17px;top:756px;width:1177px;height:18px;background:#e6f9e6;"></div>
<div class="tx" style="left:20px;top:758px;color:#000;letter-spacing:-0.5px;">512</div>
<div style="position:absolute;left:152px;top:755px;width:1px;height:20px;background:#a0a0a0;"></div>
<div class="tx" style="left:155px;top:758px;color:#000;letter-spacing:-0.5px;">39</div>
<div style="position:absolute;left:240px;top:755px;width:1px;height:20px;background:#a0a0a0;"></div>
<div class="tx" style="left:243px;top:758px;color:#000;">Optimal De...</div>
<div style="position:absolute;left:324px;top:755px;width:1px;height:20px;background:#a0a0a0;"></div>
<div class="tx" style="left:327px;top:758px;color:#000;letter-spacing:-0.5px;">8.418</div>
<div style="position:absolute;left:456px;top:755px;width:1px;height:20px;background:#a0a0a0;"></div>
<div class="tx" style="left:459px;top:758px;color:#000;letter-spacing:-0.5px;">3318.96</div>
<div style="position:absolute;left:579px;top:755px;width:1px;height:20px;background:#a0a0a0;"></div>
<div class="tx" style="left:582px;top:758px;color:#000;letter-spacing:-0.5px;">0.000</div>
<div style="position:absolute;left:702px;top:755px;width:1px;height:20px;background:#a0a0a0;"></div>
<div class="tx" style="left:705px;top:758px;color:#000;letter-spacing:-0.5px;">83.000</div>
<div style="position:absolute;left:825px;top:755px;width:1px;height:20px;background:#a0a0a0;"></div>
<div class="tx" style="left:828px;top:758px;color:#000;letter-spacing:-0.5px;">25.300</div>
<div style="position:absolute;left:948px;top:755px;width:1px;height:20px;background:#a0a0a0;"></div>
<div class="tx" style="left:951px;top:758px;color:#000;letter-spacing:-0.5px;">20.400</div>
<div style="position:absolute;left:1071px;top:755px;width:1px;height:20px;background:#a0a0a0;"></div>
<div class="tx" style="left:1074px;top:758px;color:#000;">2.0m Overhang</div>
<div style="position:absolute;left:16px;top:774px;width:1179px;height:20px;background:#a0a0a0;"></div>
<div style="position:absolute;left:17px;top:775px;width:1177px;height:18px;background:#e6f9e6;"></div>
<div class="tx" style="left:20px;top:777px;color:#000;letter-spacing:-0.5px;">541</div>
<div style="position:absolute;left:152px;top:774px;width:1px;height:20px;background:#a0a0a0;"></div>
<div class="tx" style="left:155px;top:777px;color:#000;letter-spacing:-0.5px;">41</div>
<div style="position:absolute;left:240px;top:774px;width:1px;height:20px;background:#a0a0a0;"></div>
<div class="tx" style="left:243px;top:777px;color:#000;">Optimal De...</div>
<div style="position:absolute;left:324px;top:774px;width:1px;height:20px;background:#a0a0a0;"></div>
<div class="tx" style="left:327px;top:777px;color:#000;letter-spacing:-0.5px;">8.490</div>
<div style="position:absolute;left:456px;top:774px;width:1px;height:20px;background:#a0a0a0;"></div>
<div class="tx" style="left:459px;top:777px;color:#000;letter-spacing:-0.5px;">3036.18</div>
<div style="position:absolute;left:579px;top:774px;width:1px;height:20px;background:#a0a0a0;"></div>
<div class="tx" style="left:582px;top:777px;color:#000;letter-spacing:-0.5px;">0.000</div>
<div style="position:absolute;left:702px;top:774px;width:1px;height:20px;background:#a0a0a0;"></div>
<div class="tx" style="left:705px;top:777px;color:#000;letter-spacing:-0.5px;">99.000</div>
<div style="position:absolute;left:825px;top:774px;width:1px;height:20px;background:#a0a0a0;"></div>
<div class="tx" style="left:828px;top:777px;color:#000;letter-spacing:-0.5px;">25.400</div>
<div style="position:absolute;left:948px;top:774px;width:1px;height:20px;background:#a0a0a0;"></div>
<div class="tx" style="left:951px;top:777px;color:#000;letter-spacing:-0.5px;">20.000</div>
<div style="position:absolute;left:1071px;top:774px;width:1px;height:20px;background:#a0a0a0;"></div>
<div class="tx" style="left:1074px;top:777px;color:#000;">1.5m Overhang</div>
<div style="position:absolute;left:16px;top:793px;width:1179px;height:20px;background:#a0a0a0;"></div>
<div style="position:absolute;left:17px;top:794px;width:1177px;height:18px;background:#ff0000;"></div>
<div style="position:absolute;left:17px;top:794px;width:1177px;height:18px;background:#1f7fd6;"></div>
<div style="position:absolute;left:18px;top:795px;width:1175px;height:16px;background:#ff0000;"></div>
<div class="tx" style="left:20px;top:796px;color:#fff;letter-spacing:-0.5px;">460</div>
<div style="position:absolute;left:152px;top:793px;width:1px;height:20px;background:#a0a0a0;"></div>
<div class="tx" style="left:155px;top:796px;color:#fff;letter-spacing:-0.5px;">35</div>
<div style="position:absolute;left:240px;top:793px;width:1px;height:20px;background:#a0a0a0;"></div>
<div class="tx" style="left:243px;top:796px;color:#fff;">Optimal De...</div>
<div style="position:absolute;left:324px;top:793px;width:1px;height:20px;background:#a0a0a0;"></div>
<div class="tx" style="left:327px;top:796px;color:#fff;letter-spacing:-0.5px;">8.534</div>
<div style="position:absolute;left:456px;top:793px;width:1px;height:20px;background:#a0a0a0;"></div>
<div class="tx" style="left:459px;top:796px;color:#fff;letter-spacing:-0.5px;">2770.41</div>
<div style="position:absolute;left:579px;top:793px;width:1px;height:20px;background:#a0a0a0;"></div>
<div class="tx" style="left:582px;top:796px;color:#fff;letter-spacing:-0.5px;">0.000</div>
<div style="position:absolute;left:702px;top:793px;width:1px;height:20px;background:#a0a0a0;"></div>
<div class="tx" style="left:705px;top:796px;color:#fff;letter-spacing:-0.5px;">97.000</div>
<div style="position:absolute;left:825px;top:793px;width:1px;height:20px;background:#a0a0a0;"></div>
<div class="tx" style="left:828px;top:796px;color:#fff;letter-spacing:-0.5px;">25.500</div>
<div style="position:absolute;left:948px;top:793px;width:1px;height:20px;background:#a0a0a0;"></div>
<div class="tx" style="left:951px;top:796px;color:#fff;letter-spacing:-0.5px;">20.000</div>
<div style="position:absolute;left:1071px;top:793px;width:1px;height:20px;background:#a0a0a0;"></div>
<div class="tx" style="left:1074px;top:796px;color:#fff;">2.0m Overhang</div>
<div style="position:absolute;left:1px;top:812px;width:1194px;height:1px;background:#a0a0a0;"></div>
<div style="position:absolute;left:3px;top:816px;width:12px;height:12px;background:#808080;"></div>
<div style="position:absolute;left:3px;top:816px;width:11px;height:11px;background:#fff;"></div>
<div style="position:absolute;left:4px;top:817px;width:10px;height:10px;background:#f0f0f0;"></div>
<div style="position:absolute;left:6px;top:821px;width:6px;height:1px;background:#000;"></div>
<div class="tx" style="left:18px;top:815px;font-weight:bold;letter-spacing:0.7px">Failed constraint</div>
<div style="position:absolute;left:16px;top:831px;width:1179px;height:20px;background:#a0a0a0;"></div>
<div style="position:absolute;left:17px;top:832px;width:1177px;height:18px;background:#ffff00;"></div>
<div class="tx" style="left:20px;top:834px;color:#000;letter-spacing:-0.5px;">370</div>
<div style="position:absolute;left:152px;top:831px;width:1px;height:20px;background:#a0a0a0;"></div>
<div class="tx" style="left:155px;top:834px;color:#000;letter-spacing:-0.5px;">28</div>
<div style="position:absolute;left:240px;top:831px;width:1px;height:20px;background:#a0a0a0;"></div>
<div class="tx" style="left:243px;top:834px;color:#000;">Failed cons...</div>
<div style="position:absolute;left:324px;top:831px;width:1px;height:20px;background:#a0a0a0;"></div>
<div class="tx" style="left:327px;top:834px;color:#000;letter-spacing:-0.5px;">3.378</div>
<div style="position:absolute;left:456px;top:831px;width:1px;height:20px;background:#a0a0a0;"></div>
<div class="tx" style="left:459px;top:834px;color:#000;letter-spacing:-0.5px;">1920.53</div>
<div style="position:absolute;left:579px;top:831px;width:1px;height:20px;background:#a0a0a0;"></div>
<div class="tx" style="left:582px;top:834px;color:#000;letter-spacing:-0.5px;">100.000</div>
<div style="position:absolute;left:702px;top:831px;width:1px;height:20px;background:#a0a0a0;"></div>
<div class="tx" style="left:705px;top:834px;color:#000;letter-spacing:-0.5px;">50.000</div>
<div style="position:absolute;left:825px;top:831px;width:1px;height:20px;background:#a0a0a0;"></div>
<div class="tx" style="left:828px;top:834px;color:#000;letter-spacing:-0.5px;">25.900</div>
<div style="position:absolute;left:948px;top:831px;width:1px;height:20px;background:#a0a0a0;"></div>
<div class="tx" style="left:951px;top:834px;color:#000;letter-spacing:-0.5px;">20.000</div>
<div style="position:absolute;left:1071px;top:831px;width:1px;height:20px;background:#a0a0a0;"></div>
<div class="tx" style="left:1074px;top:834px;color:#000;">1.5m Overhang</div>
<div style="position:absolute;left:16px;top:850px;width:1179px;height:20px;background:#a0a0a0;"></div>
<div style="position:absolute;left:17px;top:851px;width:1177px;height:18px;background:#ffff00;"></div>
<div class="tx" style="left:20px;top:853px;color:#000;letter-spacing:-0.5px;">199</div>
<div style="position:absolute;left:152px;top:850px;width:1px;height:20px;background:#a0a0a0;"></div>
<div class="tx" style="left:155px;top:853px;color:#000;letter-spacing:-0.5px;">14</div>
<div style="position:absolute;left:240px;top:850px;width:1px;height:20px;background:#a0a0a0;"></div>
<div class="tx" style="left:243px;top:853px;color:#000;">Failed cons...</div>
<div style="position:absolute;left:324px;top:850px;width:1px;height:20px;background:#a0a0a0;"></div>
<div class="tx" style="left:327px;top:853px;color:#000;letter-spacing:-0.5px;">3.555</div>
<div style="position:absolute;left:456px;top:850px;width:1px;height:20px;background:#a0a0a0;"></div>
<div class="tx" style="left:459px;top:853px;color:#000;letter-spacing:-0.5px;">1993.85</div>
<div style="position:absolute;left:579px;top:850px;width:1px;height:20px;background:#a0a0a0;"></div>
<div class="tx" style="left:582px;top:853px;color:#000;letter-spacing:-0.5px;">100.000</div>
<div style="position:absolute;left:702px;top:850px;width:1px;height:20px;background:#a0a0a0;"></div>
<div class="tx" style="left:705px;top:853px;color:#000;letter-spacing:-0.5px;">45.000</div>
<div style="position:absolute;left:825px;top:850px;width:1px;height:20px;background:#a0a0a0;"></div>
<div class="tx" style="left:828px;top:853px;color:#000;letter-spacing:-0.5px;">25.800</div>
<div style="position:absolute;left:948px;top:850px;width:1px;height:20px;background:#a0a0a0;"></div>
<div class="tx" style="left:951px;top:853px;color:#000;letter-spacing:-0.5px;">20.200</div>
<div style="position:absolute;left:1071px;top:850px;width:1px;height:20px;background:#a0a0a0;"></div>
<div class="tx" style="left:1074px;top:853px;color:#000;">0.5m Overhang</div>
<div style="position:absolute;left:16px;top:869px;width:1179px;height:20px;background:#a0a0a0;"></div>
<div style="position:absolute;left:17px;top:870px;width:1177px;height:18px;background:#ffff00;"></div>
<div class="tx" style="left:20px;top:872px;color:#000;letter-spacing:-0.5px;">276</div>
<div style="position:absolute;left:152px;top:869px;width:1px;height:20px;background:#a0a0a0;"></div>
<div class="tx" style="left:155px;top:872px;color:#000;letter-spacing:-0.5px;">20</div>
<div style="position:absolute;left:240px;top:869px;width:1px;height:20px;background:#a0a0a0;"></div>
<div class="tx" style="left:243px;top:872px;color:#000;">Failed cons...</div>
<div style="position:absolute;left:324px;top:869px;width:1px;height:20px;background:#a0a0a0;"></div>
<div class="tx" style="left:327px;top:872px;color:#000;letter-spacing:-0.5px;">3.605</div>
<div style="position:absolute;left:456px;top:869px;width:1px;height:20px;background:#a0a0a0;"></div>
<div class="tx" style="left:459px;top:872px;color:#000;letter-spacing:-0.5px;">2873.25</div>
<div style="position:absolute;left:579px;top:869px;width:1px;height:20px;background:#a0a0a0;"></div>
<div class="tx" style="left:582px;top:872px;color:#000;letter-spacing:-0.5px;">100.000</div>
<div style="position:absolute;left:702px;top:869px;width:1px;height:20px;background:#a0a0a0;"></div>
<div class="tx" style="left:705px;top:872px;color:#000;letter-spacing:-0.5px;">33.000</div>
<div style="position:absolute;left:825px;top:869px;width:1px;height:20px;background:#a0a0a0;"></div>
<div class="tx" style="left:828px;top:872px;color:#000;letter-spacing:-0.5px;">25.900</div>
<div style="position:absolute;left:948px;top:869px;width:1px;height:20px;background:#a0a0a0;"></div>
<div class="tx" style="left:951px;top:872px;color:#000;letter-spacing:-0.5px;">21.200</div>
<div style="position:absolute;left:1071px;top:869px;width:1px;height:20px;background:#a0a0a0;"></div>
<div class="tx" style="left:1074px;top:872px;color:#000;">1.5m Overhang</div>
<div style="position:absolute;left:1194px;top:680px;width:1px;height:207px;background:#a0a0a0;"></div>
<div style="position:absolute;left:1195px;top:617px;width:21px;height:270px;background:#f0f0f0;"></div>
<div style="position:absolute;left:1203px;top:639px;width:6px;height:21px;background:#888;"></div>
</body></html>
